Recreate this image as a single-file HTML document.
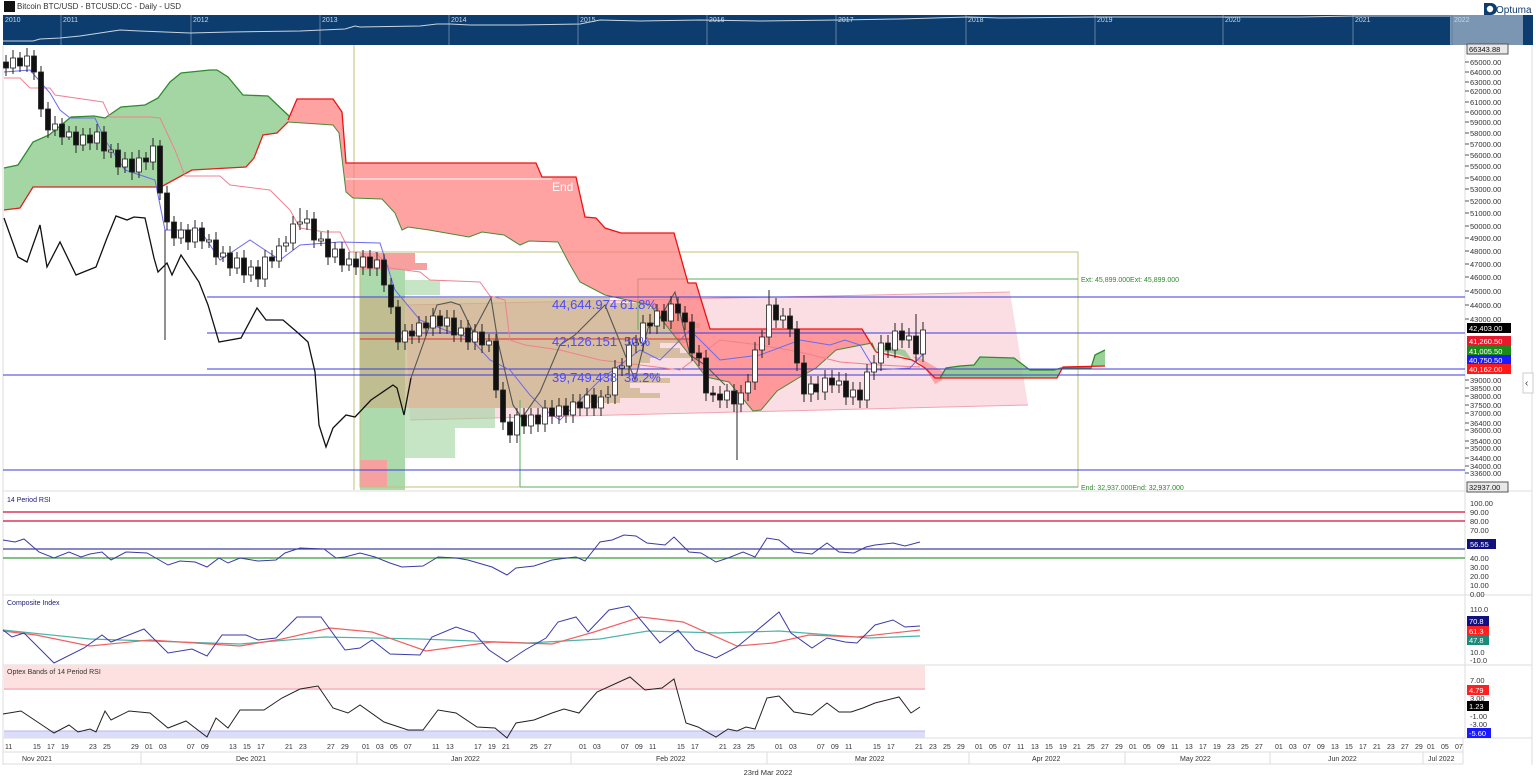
<!DOCTYPE html>
<html><head><meta charset="utf-8">
<style>
html,body{margin:0;padding:0;background:#fff;width:1536px;height:783px;overflow:hidden}
svg{display:block;font-family:"Liberation Sans",sans-serif}
.t7{font-size:7px;fill:#333}
.ax{font-size:7.5px;fill:#333}
</style></head><body>
<svg width="1536" height="783" viewBox="0 0 1536 783" xmlns="http://www.w3.org/2000/svg">
<!-- header -->
<rect x="4" y="1" width="11" height="11" fill="#111"/>
<text x="17" y="9" font-size="8" fill="#333">Bitcoin BTC/USD - BTCUSD:CC - Daily - USD</text>
<path d="M1484 3 h7 a6 6 0 0 1 0 12 h-7 z" fill="#0d3d6e"/><circle cx="1490" cy="9" r="3.2" fill="#fff"/>
<text x="1496" y="13" font-size="10" fill="#0d3d6e">Optuma</text>
<!-- navigator -->
<rect x="3" y="15" width="1530" height="30" fill="#0d3d6e"/>
<rect x="1450" y="15" width="73" height="30" fill="#7a96b3"/>
<g stroke="#5f7fa0">
<line x1="61" x2="61" y1="15" y2="45"/><line x1="191" x2="191" y1="15" y2="45"/><line x1="320" x2="320" y1="15" y2="45"/><line x1="449" x2="449" y1="15" y2="45"/><line x1="578" x2="578" y1="15" y2="45"/><line x1="707" x2="707" y1="15" y2="45"/><line x1="836" x2="836" y1="15" y2="45"/><line x1="966" x2="966" y1="15" y2="45"/><line x1="1095" x2="1095" y1="15" y2="45"/><line x1="1223" x2="1223" y1="15" y2="45"/><line x1="1353" x2="1353" y1="15" y2="45"/><line x1="1452" x2="1452" y1="15" y2="45"/>
</g>
<g font-size="7" fill="#cfd8e3">
<text x="5" y="22">2010</text><text x="63" y="22">2011</text><text x="193" y="22">2012</text><text x="322" y="22">2013</text><text x="451" y="22">2014</text><text x="580" y="22">2015</text><text x="709" y="22">2016</text><text x="838" y="22">2017</text><text x="968" y="22">2018</text><text x="1097" y="22">2019</text><text x="1225" y="22">2020</text><text x="1355" y="22">2021</text><text x="1454" y="22">2022</text>
</g>
<polyline fill="none" stroke="#c9d4e0" points="3,41 33,41 40,39 60,38 80,36 100,33 120,30 140,31 165,32 190,33 230,32 300,31 322,30 345,29 355,26 360,27 420,26 437,24 450,24 470,25 520,25 580,24 600,20 640,21 700,20 760,21 838,20 900,19 968,17 1000,18 1097,17 1225,17 1300,17 1355,16 1450,16"/>

<!-- borders -->
<g stroke="#ddd">
<line x1="1465" x2="1465" y1="45" y2="738"/><line x1="1532" x2="1532" y1="45" y2="765"/>
<line x1="3" x2="1532" y1="491" y2="491"/><line x1="3" x2="1532" y1="595" y2="595"/><line x1="3" x2="1532" y1="665" y2="665"/><line x1="3" x2="1532" y1="738" y2="738"/>
<line x1="3" x2="3" y1="45" y2="765"/>
</g>

<!-- pink channel & volume profile -->
<polygon points="405,305 1010,292 1028,405 410,420" fill="#f9d3d9" fill-opacity="0.75"/>
<line x1="405" y1="305" x2="1010" y2="292" stroke="#f2a3b0"/><line x1="410" y1="420" x2="1028" y2="405" stroke="#f2a3b0"/>
<rect x="360" y="270" width="45" height="220" fill="#9fd49f" fill-opacity="0.85"/>
<rect x="360" y="253" width="55" height="17" fill="#f7a0a0"/><rect x="415" y="263" width="12" height="7" fill="#f7a0a0"/>
<rect x="360" y="460" width="27" height="27" fill="#f7a0a0"/><rect x="360" y="462" width="13" height="25" fill="#f7a0a0"/>
<rect x="405" y="280" width="35" height="15" fill="#9fd49f" fill-opacity="0.6"/>
<rect x="405" y="408" width="90" height="20" fill="#9fd49f" fill-opacity="0.6"/>
<rect x="405" y="428" width="50" height="30" fill="#9fd49f" fill-opacity="0.6"/>
<g fill="#c8b083" fill-opacity="0.7">
<rect x="360" y="298" width="250" height="5"/><rect x="360" y="303" width="290" height="5"/><rect x="360" y="308" width="300" height="5"/><rect x="360" y="313" width="320" height="5"/><rect x="360" y="318" width="330" height="5"/><rect x="360" y="323" width="340" height="5"/><rect x="360" y="328" width="335" height="5"/><rect x="360" y="333" width="320" height="5"/><rect x="360" y="338" width="330" height="5"/><rect x="360" y="343" width="300" height="5"/><rect x="360" y="348" width="320" height="5"/><rect x="360" y="353" width="330" height="5"/><rect x="360" y="358" width="290" height="5"/><rect x="360" y="363" width="280" height="5"/><rect x="360" y="368" width="270" height="5"/><rect x="360" y="373" width="300" height="5"/><rect x="360" y="378" width="310" height="5"/><rect x="360" y="383" width="270" height="5"/><rect x="360" y="388" width="280" height="5"/><rect x="360" y="393" width="300" height="5"/><rect x="360" y="398" width="260" height="5"/><rect x="360" y="403" width="230" height="5"/>
</g>
<rect x="360" y="252" width="718" height="235" fill="none" stroke="#c2c27a"/>
<line x1="354" x2="354" y1="45" y2="490" stroke="#c2c27a"/>
<g stroke="#5cae5c"><line x1="638" x2="1078" y1="279" y2="279"/><line x1="638" x2="638" y1="279" y2="330"/><line x1="520" x2="1078" y1="487" y2="487"/><line x1="520" x2="520" y1="400" y2="487"/></g>
<text x="1081" y="282" font-size="7" fill="#2e8b2e">Ext: 45,899.000Ext: 45,899.000</text>
<text x="1081" y="490" font-size="7" fill="#2e8b2e">End: 32,937.000End: 32,937.000</text>

<!-- clouds -->
<polygon points="4,168 18,165 33,142 49,135 71,117 94,116 105,118 121,107 145,105 158,98 170,82 181,73 210,70 217,70 228,77 243,95 268,96 290,117 288,122 277,133 263,135 254,158 246,167 192,170 170,182 161,187 33,187 20,208 4,210" fill="#7ec57e" fill-opacity="0.7"/>
<polyline fill="none" stroke="#2e8b2e" stroke-width="1.3" points="4,168 18,165 33,142 49,135 71,117 94,116 105,118 121,107 145,105 158,98 170,82 181,73 210,70 217,70 228,77 243,95 268,96 290,117"/>
<polyline fill="none" stroke="#e02020" stroke-width="1.3" points="4,210 20,208 33,187 161,187 170,182 192,170 246,167 254,158 263,135 277,133 288,122"/>
<polygon points="288,120 297,99 333,99 342,112 346,163 536,163 542,177 576,177 585,217 596,218 605,228 621,233 674,233 688,283 696,283 710,329 862,329 876,352 872,343 836,350 816,368 800,377 777,391 761,410 753,411 729,382 706,377 688,353 650,305 605,295 580,282 569,263 558,242 529,241 520,245 504,235 482,232 469,237 429,230 408,227 402,230 395,213 382,199 353,198 346,192 339,133 333,125 288,122" fill="#ff7b7b" fill-opacity="0.7"/>
<polyline fill="none" stroke="#ee1111" stroke-width="1.3" points="288,120 297,99 333,99 342,112 346,163 536,163 542,177 576,177 585,217 596,218 605,228 621,233 674,233 688,283 696,283 710,329 862,329 876,352"/>
<polyline fill="none" stroke="#4a8a3a" points="288,122 333,125 339,133 346,192 353,198 382,199 395,213 402,230 408,227 429,230 469,237 482,232 504,235 520,245 529,241 558,242 569,263 580,282 605,295 650,305 688,353 706,377 729,382 753,411 761,410 777,391 800,377 816,368 836,350 872,343 876,352"/>
<polygon points="876,350 880,343 890,347 905,350 912,360 900,355" fill="#7ec57e" fill-opacity="0.7"/>
<polygon points="912,356 925,368 935,384 942,380 944,372 930,364 920,358" fill="#ff8b8b" fill-opacity="0.7"/>
<polyline fill="none" stroke="#ee1111" stroke-width="1.3" points="876,352 912,360 925,368 935,378 940,378"/>
<polygon points="940,378 946,368 960,366 974,365 980,357 1014,358 1030,370 1054,370 1061,368 1091,368 1095,355 1105,350 1105,366 1063,367 1057,378" fill="#7ec57e" fill-opacity="0.8"/>
<polyline fill="none" stroke="#2e8b2e" stroke-width="1.3" points="940,378 946,368 960,366 974,365 980,357 1014,358 1030,370 1054,370 1061,368 1091,368 1095,355 1105,350"/>
<polyline fill="none" stroke="#ee1111" stroke-width="1.3" points="940,378 1057,378 1063,367 1105,366"/>
<line x1="346" x2="552" y1="179" y2="179" stroke="#fff"/>
<text x="552" y="191" font-size="12" fill="#fff">End</text>

<!-- horizontal lines -->
<g stroke="#3b3bdc"><line x1="207" x2="1465" y1="297" y2="297"/><line x1="207" x2="1465" y1="333" y2="333"/><line x1="207" x2="1465" y1="369" y2="369"/><line x1="3" x2="1465" y1="375" y2="375"/><line x1="3" x2="1465" y1="470" y2="470"/></g>
<line x1="360" x2="690" y1="339" y2="339" stroke="#e23030"/>

<!-- thin ichimoku lines -->
<polyline fill="none" stroke="#f08090" points="4,78 20,78 30,88 50,88 55,95 103,102 110,117 150,117 160,118 175,150 185,176 220,176 230,185 270,190 290,210 300,228 325,232 340,232 350,252 375,252 390,268 420,272 430,280 480,282 490,296 505,300 510,340 525,345 560,350 600,360 640,365 680,370 720,340 760,345 800,352 840,362 880,365 920,367"/>
<polyline fill="none" stroke="#6a6af0" points="4,72 30,70 50,93 60,110 70,118 95,118 105,140 125,170 155,180 165,230 200,230 220,260 250,240 280,260 300,245 340,242 380,243 395,290 420,320 445,330 470,338 490,360 510,370 530,395 545,410 560,420 580,400 600,380 640,350 660,360 690,330 720,360 760,355 800,340 830,345 845,340 860,345 875,370 910,368 925,352"/>
<!-- chikou -->
<polyline fill="none" stroke="#111" stroke-width="1.3" points="4,218 18,257 27,262 40,225 47,267 60,242 76,275 96,267 107,238 116,216 127,220 134,217 145,218 154,258 158,272 167,263 172,275 181,255 199,282 208,305 219,342 241,338 257,308 266,320 283,320 297,332 308,342 315,372 319,425 326,447 333,428 346,415 355,417 371,400 393,385 397,388 404,415 411,378"/>
<polyline fill="none" stroke="#555" stroke-width="1.1" points="411,378 437,305 451,302 460,305 473,332 491,298 498,342 513,405 522,418 540,392 560,345 575,335 590,320 605,305 620,342 635,380 648,328 660,318 675,292 690,355 705,365 725,385"/>

<!-- candle wicks -->
<path stroke="#222" fill="none" d="M6 55V76M13 50V74M20 52V72M27 48V72M34 50V80M41 66V117M48 102V138M55 116V136M62 118V145M69 126V140M76 126V153M83 128V151M90 128V150M97 124V150M104 126V159M111 144V158M118 143V175M125 152V173M132 152V180M139 150V178M146 152V170M153 138V170M160 140V200M165 230V340M167 186V230M174 216V246M181 222V244M188 224V250M195 220V248M202 222V249M209 234V248M216 232V265M223 246V262M230 246V276M237 252V274M244 250V283M251 260V282M258 260V287M265 250V287M272 250V268M279 238V268M286 236V252M293 216V250M300 208V230M307 210V230M314 212V248M321 232V246M328 230V265M335 242V263M342 242V272M349 252V271M356 252V275M363 250V275M370 250V276M377 252V276M384 254V292M391 278V314M398 300V350M405 324V350M412 324V344M419 316V343M426 316V336M433 308V336M440 310V334M447 310V334M454 310V342M461 320V342M468 320V350M475 324V350M482 324V353M489 334V352M496 334V398M503 382V430M510 414V443M517 408V443M524 408V434M531 408V434M538 408V432M545 400V432M552 400V424M559 398V424M566 398V423M573 394V423M580 394V416M587 388V416M594 388V416M601 390V416M608 386V404M615 360V404M622 358V376M629 338V374M636 335V353M643 315V351M650 314V334M657 304V334M664 304V329M671 296V329M678 297V321M685 306V330M692 314V361M699 345V366M706 350V401M713 386V402M720 386V408M727 384V408M734 384V412M737 390V460M741 385V412M748 374V401M755 342V390M762 330V358M769 290V345M776 298V328M783 308V328M790 308V337M797 321V371M804 355V402M811 376V402M818 376V400M825 370V400M832 370V393M839 372V393M846 373V405M853 382V405M860 382V408M867 364V408M874 355V380M881 335V371M888 335V358M895 323V358M902 323V348M909 328V348M916 314V362M923 322V362"/>
<!-- bodies -->
<g fill="#111" stroke="#222" stroke-width="0.8">
<rect x="3.5" y="62" width="5" height="6"/><rect x="17.5" y="58" width="5" height="8"/><rect x="31.5" y="56" width="5" height="16"/><rect x="38.5" y="72" width="5" height="37"/><rect x="45.5" y="109" width="5" height="21"/><rect x="59.5" y="124" width="5" height="13"/><rect x="73.5" y="132" width="5" height="13"/><rect x="87.5" y="135" width="5" height="8"/><rect x="101.5" y="132" width="5" height="19"/><rect x="115.5" y="150" width="5" height="17"/><rect x="129.5" y="159" width="5" height="13"/><rect x="143.5" y="158" width="5" height="4"/><rect x="157.5" y="146" width="5" height="47"/><rect x="164.5" y="193" width="5" height="29"/><rect x="171.5" y="222" width="5" height="16"/><rect x="185.5" y="230" width="5" height="12"/><rect x="199.5" y="228" width="5" height="13"/><rect x="213.5" y="240" width="5" height="17"/><rect x="227.5" y="253" width="5" height="15"/><rect x="241.5" y="258" width="5" height="17"/><rect x="255.5" y="267" width="5" height="12"/><rect x="269.5" y="257" width="5" height="4"/><rect x="311.5" y="219" width="5" height="21"/><rect x="325.5" y="239" width="5" height="18"/><rect x="339.5" y="249" width="5" height="16"/><rect x="353.5" y="259" width="5" height="8"/><rect x="367.5" y="257" width="5" height="11"/><rect x="381.5" y="260" width="5" height="25"/><rect x="388.5" y="285" width="5" height="22"/><rect x="395.5" y="307" width="5" height="35"/><rect x="409.5" y="331" width="5" height="5"/><rect x="423.5" y="323" width="5" height="5"/><rect x="437.5" y="316" width="5" height="10"/><rect x="451.5" y="318" width="5" height="17"/><rect x="465.5" y="328" width="5" height="14"/><rect x="479.5" y="332" width="5" height="13"/><rect x="493.5" y="341" width="5" height="49"/><rect x="500.5" y="390" width="5" height="32"/><rect x="507.5" y="422" width="5" height="13"/><rect x="521.5" y="415" width="5" height="11"/><rect x="535.5" y="415" width="5" height="9"/><rect x="549.5" y="408" width="5" height="8"/><rect x="563.5" y="406" width="5" height="9"/><rect x="577.5" y="402" width="5" height="6"/><rect x="591.5" y="395" width="5" height="13"/><rect x="647.5" y="323" width="5" height="3"/><rect x="661.5" y="311" width="5" height="10"/><rect x="675.5" y="304" width="5" height="9"/><rect x="682.5" y="313" width="5" height="9"/><rect x="689.5" y="322" width="5" height="31"/><rect x="696.5" y="353" width="5" height="5"/><rect x="703.5" y="358" width="5" height="35"/><rect x="710.5" y="393" width="5" height="2"/><rect x="717.5" y="394" width="5" height="6"/><rect x="731.5" y="391" width="5" height="13"/><rect x="773.5" y="305" width="5" height="15"/><rect x="787.5" y="316" width="5" height="13"/><rect x="794.5" y="329" width="5" height="34"/><rect x="801.5" y="363" width="5" height="31"/><rect x="813.5" y="384" width="5" height="8"/><rect x="829.5" y="378" width="5" height="7"/><rect x="843.5" y="381" width="5" height="16"/><rect x="857.5" y="390" width="5" height="10"/><rect x="885.5" y="343" width="5" height="7"/><rect x="899.5" y="331" width="5" height="9"/><rect x="913.5" y="336" width="5" height="18"/>
</g>
<g fill="#fff" stroke="#222" stroke-width="0.8">
<rect x="10.5" y="58" width="5" height="10"/><rect x="24.5" y="56" width="5" height="10"/><rect x="52.5" y="124" width="5" height="6"/><rect x="66.5" y="132" width="5" height="5"/><rect x="80.5" y="135" width="5" height="10"/><rect x="94.5" y="132" width="5" height="11"/><rect x="108.5" y="150" width="5" height="2"/><rect x="122.5" y="159" width="5" height="8"/><rect x="136.5" y="158" width="5" height="14"/><rect x="150.5" y="146" width="5" height="16"/><rect x="178.5" y="230" width="5" height="8"/><rect x="192.5" y="228" width="5" height="14"/><rect x="206.5" y="240" width="5" height="2"/><rect x="220.5" y="253" width="5" height="4"/><rect x="234.5" y="258" width="5" height="10"/><rect x="248.5" y="267" width="5" height="8"/><rect x="262.5" y="257" width="5" height="22"/><rect x="276.5" y="246" width="5" height="15"/><rect x="283.5" y="243" width="5" height="3"/><rect x="290.5" y="224" width="5" height="19"/><rect x="297.5" y="222" width="5" height="2"/><rect x="304.5" y="219" width="5" height="4"/><rect x="318.5" y="239" width="5" height="2"/><rect x="332.5" y="249" width="5" height="8"/><rect x="346.5" y="259" width="5" height="6"/><rect x="360.5" y="257" width="5" height="10"/><rect x="374.5" y="260" width="5" height="8"/><rect x="402.5" y="331" width="5" height="11"/><rect x="416.5" y="323" width="5" height="13"/><rect x="430.5" y="316" width="5" height="12"/><rect x="444.5" y="318" width="5" height="8"/><rect x="458.5" y="328" width="5" height="7"/><rect x="472.5" y="332" width="5" height="10"/><rect x="486.5" y="341" width="5" height="4"/><rect x="514.5" y="415" width="5" height="20"/><rect x="528.5" y="415" width="5" height="11"/><rect x="542.5" y="408" width="5" height="16"/><rect x="556.5" y="406" width="5" height="10"/><rect x="570.5" y="402" width="5" height="13"/><rect x="584.5" y="395" width="5" height="13"/><rect x="598.5" y="397" width="5" height="11"/><rect x="605.5" y="395" width="5" height="2"/><rect x="612.5" y="368" width="5" height="27"/><rect x="619.5" y="366" width="5" height="2"/><rect x="626.5" y="345" width="5" height="21"/><rect x="633.5" y="343" width="5" height="2"/><rect x="640.5" y="323" width="5" height="20"/><rect x="654.5" y="311" width="5" height="15"/><rect x="668.5" y="304" width="5" height="17"/><rect x="724.5" y="391" width="5" height="9"/><rect x="738.5" y="393" width="5" height="11"/><rect x="745.5" y="382" width="5" height="11"/><rect x="752.5" y="350" width="5" height="32"/><rect x="759.5" y="337" width="5" height="13"/><rect x="766.5" y="305" width="5" height="32"/><rect x="780.5" y="316" width="5" height="4"/><rect x="808.5" y="384" width="5" height="10"/><rect x="822.5" y="378" width="5" height="14"/><rect x="836.5" y="381" width="5" height="4"/><rect x="850.5" y="390" width="5" height="7"/><rect x="864.5" y="372" width="5" height="28"/><rect x="871.5" y="363" width="5" height="9"/><rect x="878.5" y="343" width="5" height="20"/><rect x="892.5" y="331" width="5" height="19"/><rect x="906.5" y="336" width="5" height="4"/><rect x="920.5" y="330" width="5" height="24"/>
</g>

<!-- fib labels -->
<g font-size="13" fill="#4b4bff">
<text x="552" y="309">44,644.974</text><text x="620" y="309">61.8%</text>
<text x="552" y="346">42,126.151</text><text x="624" y="346">50%</text>
<text x="552" y="382">39,749.438</text><text x="624" y="382">38.2%</text>
</g>

<!-- price axis -->
<g stroke="#555">
<line x1="1465" x2="1469" y1="62" y2="62"/><line x1="1465" x2="1469" y1="72" y2="72"/><line x1="1465" x2="1469" y1="82" y2="82"/><line x1="1465" x2="1469" y1="91" y2="91"/><line x1="1465" x2="1469" y1="102" y2="102"/><line x1="1465" x2="1469" y1="112" y2="112"/><line x1="1465" x2="1469" y1="122" y2="122"/><line x1="1465" x2="1469" y1="133" y2="133"/><line x1="1465" x2="1469" y1="144" y2="144"/><line x1="1465" x2="1469" y1="155" y2="155"/><line x1="1465" x2="1469" y1="166" y2="166"/><line x1="1465" x2="1469" y1="178" y2="178"/><line x1="1465" x2="1469" y1="189" y2="189"/><line x1="1465" x2="1469" y1="201" y2="201"/><line x1="1465" x2="1469" y1="213" y2="213"/><line x1="1465" x2="1469" y1="226" y2="226"/><line x1="1465" x2="1469" y1="238" y2="238"/><line x1="1465" x2="1469" y1="251" y2="251"/><line x1="1465" x2="1469" y1="264" y2="264"/><line x1="1465" x2="1469" y1="277" y2="277"/><line x1="1465" x2="1469" y1="291" y2="291"/><line x1="1465" x2="1469" y1="305" y2="305"/><line x1="1465" x2="1469" y1="319" y2="319"/>
<line x1="1465" x2="1469" y1="380" y2="380"/><line x1="1465" x2="1469" y1="388" y2="388"/><line x1="1465" x2="1469" y1="396" y2="396"/><line x1="1465" x2="1469" y1="405" y2="405"/><line x1="1465" x2="1469" y1="413" y2="413"/><line x1="1465" x2="1469" y1="423" y2="423"/><line x1="1465" x2="1469" y1="430" y2="430"/><line x1="1465" x2="1469" y1="441" y2="441"/><line x1="1465" x2="1469" y1="448" y2="448"/><line x1="1465" x2="1469" y1="458" y2="458"/><line x1="1465" x2="1469" y1="466" y2="466"/><line x1="1465" x2="1469" y1="473" y2="473"/>
</g>
<g class="ax">
<text x="1470" y="65">65000.00</text><text x="1470" y="75">64000.00</text><text x="1470" y="85">63000.00</text><text x="1470" y="94">62000.00</text><text x="1470" y="105">61000.00</text><text x="1470" y="115">60000.00</text><text x="1470" y="125">59000.00</text><text x="1470" y="136">58000.00</text><text x="1470" y="147">57000.00</text><text x="1470" y="158">56000.00</text><text x="1470" y="169">55000.00</text><text x="1470" y="181">54000.00</text><text x="1470" y="192">53000.00</text><text x="1470" y="204">52000.00</text><text x="1470" y="216">51000.00</text><text x="1470" y="229">50000.00</text><text x="1470" y="241">49000.00</text><text x="1470" y="254">48000.00</text><text x="1470" y="267">47000.00</text><text x="1470" y="280">46000.00</text><text x="1470" y="294">45000.00</text><text x="1470" y="308">44000.00</text><text x="1470" y="322">43000.00</text>
<text x="1470" y="383">39000.00</text><text x="1470" y="391">38500.00</text><text x="1470" y="399">38000.00</text><text x="1470" y="408">37500.00</text><text x="1470" y="416">37000.00</text><text x="1470" y="426">36400.00</text><text x="1470" y="433">36000.00</text><text x="1470" y="444">35400.00</text><text x="1470" y="451">35000.00</text><text x="1470" y="461">34400.00</text><text x="1470" y="469">34000.00</text><text x="1470" y="476">33600.00</text>
</g>
<rect x="1467" y="44" width="41" height="10" fill="#e8e8e8" stroke="#555"/><text x="1469" y="52" class="ax" style="fill:#111">66343.88</text>
<rect x="1467" y="323" width="44" height="10" fill="#000"/><text x="1469" y="331" class="ax" style="fill:#fff">42,403.00</text>
<rect x="1467" y="336" width="44" height="10" fill="#e8192c"/><text x="1469" y="344" class="ax" style="fill:#fff">41,260.50</text>
<rect x="1467" y="346" width="44" height="10" fill="#1b8a1b"/><text x="1469" y="354" class="ax" style="fill:#fff">41,005.50</text>
<rect x="1467" y="355" width="44" height="10" fill="#1a1aff"/><text x="1469" y="363" class="ax" style="fill:#fff">40,750.50</text>
<rect x="1467" y="364" width="44" height="10" fill="#ff1a1a"/><text x="1469" y="372" class="ax" style="fill:#fff">40,162.00</text>
<rect x="1467" y="482" width="41" height="10" fill="#e8e8e8" stroke="#555"/><text x="1469" y="490" class="ax" style="fill:#111">32937.00</text>
<rect x="1523" y="373" width="10" height="20" fill="#fff" stroke="#ccc"/><text x="1525" y="386" font-size="10" fill="#444">‹</text>

<!-- RSI -->
<text x="7" y="502" font-size="7" fill="#1a1a7a">14 Period RSI</text>
<line x1="3" x2="1465" y1="512" y2="512" stroke="#d0103a" stroke-width="1.3"/>
<line x1="3" x2="1465" y1="521" y2="521" stroke="#d0103a" stroke-width="1.3"/>
<line x1="3" x2="1465" y1="549" y2="549" stroke="#4040a0" stroke-width="1.3"/>
<line x1="3" x2="1465" y1="558" y2="558" stroke="#3a9a3a" stroke-width="1.2"/>
<polyline fill="none" stroke="#3a3aa8" points="3,540 15,542 24,539 39,552 54,558 69,552 81,557 90,554 102,552 111,560 126,552 147,553 168,565 180,561 195,562 207,567 219,558 228,563 240,558 258,561 276,560 285,553 300,548 324,549 336,558 345,557 360,553 375,557 390,563 402,567 423,566 438,557 456,558 468,560 492,567 507,575 516,568 534,566 552,560 567,558 576,557 585,561 600,542 612,540 624,535 636,536 647,543 665,545 674,537 689,552 701,553 716,562 728,558 743,552 755,557 767,538 779,540 794,552 812,554 827,543 839,552 854,553 866,547 875,545 893,543 905,546 920,542"/>
<g class="ax">
<text x="1470" y="506">100.00</text><text x="1470" y="515">90.00</text><text x="1470" y="524">80.00</text><text x="1470" y="533">70.00</text><text x="1470" y="561">40.00</text><text x="1470" y="570">30.00</text><text x="1470" y="579">20.00</text><text x="1470" y="588">10.00</text><text x="1470" y="597">0.00</text>
</g>
<rect x="1467" y="539" width="29" height="10" fill="#101080"/><text x="1470" y="547" class="ax" style="fill:#fff">56.55</text>

<!-- Composite -->
<text x="7" y="605" font-size="7" fill="#1a1a7a">Composite Index</text>
<polyline fill="none" stroke="#4db3a8" stroke-width="1.2" points="3,630 90,639 180,642 240,644 324,637 420,639 528,643 600,639 648,631 719,633 779,631 869,638 920,636"/>
<polyline fill="none" stroke="#f06060" stroke-width="1.2" points="3,631 36,635 90,646 150,640 240,646 282,639 330,628 372,632 426,651 492,642 552,644 594,632 641,617 683,622 737,646 773,643 809,635 857,637 920,630"/>
<polyline fill="none" stroke="#3a3aa8" points="3,630 12,637 24,633 54,663 84,648 102,635 111,642 144,629 168,653 192,649 207,656 222,635 246,635 258,640 276,638 297,617 321,617 345,650 360,648 372,640 390,654 420,655 432,637 456,627 474,633 489,650 507,662 525,650 546,638 558,622 576,617 588,632 609,610 629,606 660,643 678,630 695,650 716,658 737,647 761,627 779,612 791,633 812,648 827,638 845,642 857,643 875,625 893,620 905,627 920,626"/>
<g class="ax"><text x="1470" y="612">110.0</text><text x="1470" y="655">10.0</text><text x="1470" y="663">-10.0</text></g>
<rect x="1467" y="616" width="22" height="10" fill="#101080"/><text x="1469" y="624" class="ax" style="fill:#fff">70.8</text>
<rect x="1467" y="626" width="22" height="10" fill="#ff2020"/><text x="1469" y="634" class="ax" style="fill:#fff">61.3</text>
<rect x="1467" y="635" width="22" height="10" fill="#1a8a7a"/><text x="1469" y="643" class="ax" style="fill:#fff">47.8</text>

<!-- Optex -->
<rect x="4" y="665" width="921" height="25" fill="#fde0e0"/>
<line x1="4" x2="925" y1="689" y2="689" stroke="#f4a0a8"/>
<rect x="4" y="731" width="921" height="7" fill="#dcdcfb"/>
<line x1="4" x2="925" y1="731" y2="731" stroke="#b8b8f0"/>
<text x="7" y="674" font-size="7" fill="#333">Optex Bands of 14 Period RSI</text>
<polyline fill="none" stroke="#222" points="3,714 21,711 42,725 54,733 69,725 78,732 90,729 96,732 105,711 111,720 129,711 150,713 168,728 186,721 207,737 216,718 228,728 240,710 264,710 282,698 300,689 318,686 333,708 348,713 360,705 384,722 408,730 423,730 438,710 456,713 477,727 495,728 507,738 516,723 534,720 552,713 564,709 579,713 597,692 630,677 645,690 662,688 674,679 686,723 698,727 716,737 728,729 737,731 746,727 755,729 767,698 779,696 794,712 812,715 827,703 839,712 851,712 863,708 875,703 899,697 911,713 920,707"/>
<g class="ax"><text x="1470" y="683">7.00</text><text x="1470" y="701">3.00</text><text x="1470" y="719">-1.00</text><text x="1470" y="727">-3.00</text></g>
<rect x="1467" y="685" width="22" height="10" fill="#ff2020"/><text x="1469" y="693" class="ax" style="fill:#fff">4.79</text>
<rect x="1467" y="701" width="22" height="10" fill="#000"/><text x="1469" y="709" class="ax" style="fill:#fff">1.23</text>
<rect x="1467" y="728" width="24" height="10" fill="#1a1aff"/><text x="1469" y="736" class="ax" style="fill:#fff">-5.60</text>

<!-- date axis -->
<g stroke="#ddd"><line x1="3" x2="1463" y1="752" y2="752"/><line x1="3" x2="1463" y1="764" y2="764"/><line x1="1463" x2="1463" y1="738" y2="764"/>
<line x1="141" x2="141" y1="752" y2="764"/><line x1="357" x2="357" y1="752" y2="764"/><line x1="571" x2="571" y1="752" y2="764"/><line x1="767" x2="767" y1="752" y2="764"/><line x1="969" x2="969" y1="752" y2="764"/><line x1="1125" x2="1125" y1="752" y2="764"/><line x1="1270" x2="1270" y1="752" y2="764"/><line x1="1423" x2="1423" y1="752" y2="764"/></g>
<g class="t7">
<text x="5" y="749">11</text><text x="33" y="749">15</text><text x="47" y="749">17</text><text x="61" y="749">19</text><text x="89" y="749">23</text><text x="103" y="749">25</text><text x="131" y="749">29</text>
<text x="145" y="749">01</text><text x="159" y="749">03</text><text x="187" y="749">07</text><text x="201" y="749">09</text><text x="229" y="749">13</text><text x="243" y="749">15</text><text x="257" y="749">17</text><text x="285" y="749">21</text><text x="299" y="749">23</text><text x="327" y="749">27</text><text x="341" y="749">29</text>
<text x="362" y="749">01</text><text x="376" y="749">03</text><text x="390" y="749">05</text><text x="404" y="749">07</text><text x="432" y="749">11</text><text x="446" y="749">13</text><text x="474" y="749">17</text><text x="488" y="749">19</text><text x="502" y="749">21</text><text x="530" y="749">25</text><text x="544" y="749">27</text>
<text x="579" y="749">01</text><text x="593" y="749">03</text><text x="621" y="749">07</text><text x="635" y="749">09</text><text x="649" y="749">11</text><text x="677" y="749">15</text><text x="691" y="749">17</text><text x="719" y="749">21</text><text x="733" y="749">23</text><text x="747" y="749">25</text>
<text x="775" y="749">01</text><text x="789" y="749">03</text><text x="817" y="749">07</text><text x="831" y="749">09</text><text x="845" y="749">11</text><text x="873" y="749">15</text><text x="887" y="749">17</text><text x="915" y="749">21</text><text x="929" y="749">23</text><text x="943" y="749">25</text><text x="957" y="749">29</text>
<text x="975" y="749">01</text><text x="989" y="749">05</text><text x="1003" y="749">07</text><text x="1017" y="749">11</text><text x="1031" y="749">13</text><text x="1045" y="749">15</text><text x="1059" y="749">19</text><text x="1073" y="749">21</text><text x="1087" y="749">25</text><text x="1101" y="749">27</text><text x="1115" y="749">29</text>
<text x="1129" y="749">01</text><text x="1143" y="749">05</text><text x="1157" y="749">09</text><text x="1171" y="749">11</text><text x="1185" y="749">13</text><text x="1199" y="749">17</text><text x="1213" y="749">19</text><text x="1227" y="749">23</text><text x="1241" y="749">25</text><text x="1255" y="749">27</text>
<text x="1275" y="749">01</text><text x="1289" y="749">03</text><text x="1303" y="749">07</text><text x="1317" y="749">09</text><text x="1331" y="749">13</text><text x="1345" y="749">15</text><text x="1359" y="749">17</text><text x="1373" y="749">21</text><text x="1387" y="749">23</text><text x="1401" y="749">27</text><text x="1415" y="749">29</text>
<text x="1427" y="749">01</text><text x="1441" y="749">05</text><text x="1455" y="749">07</text>
<text x="22" y="761">Nov 2021</text><text x="236" y="761">Dec 2021</text><text x="451" y="761">Jan 2022</text><text x="656" y="761">Feb 2022</text><text x="855" y="761">Mar 2022</text><text x="1032" y="761">Apr 2022</text><text x="1180" y="761">May 2022</text><text x="1328" y="761">Jun 2022</text><text x="1428" y="761">Jul 2022</text>
</g>
<text x="768" y="775" font-size="7.5" fill="#333" text-anchor="middle">23rd Mar 2022</text>
</svg>
</body></html>
